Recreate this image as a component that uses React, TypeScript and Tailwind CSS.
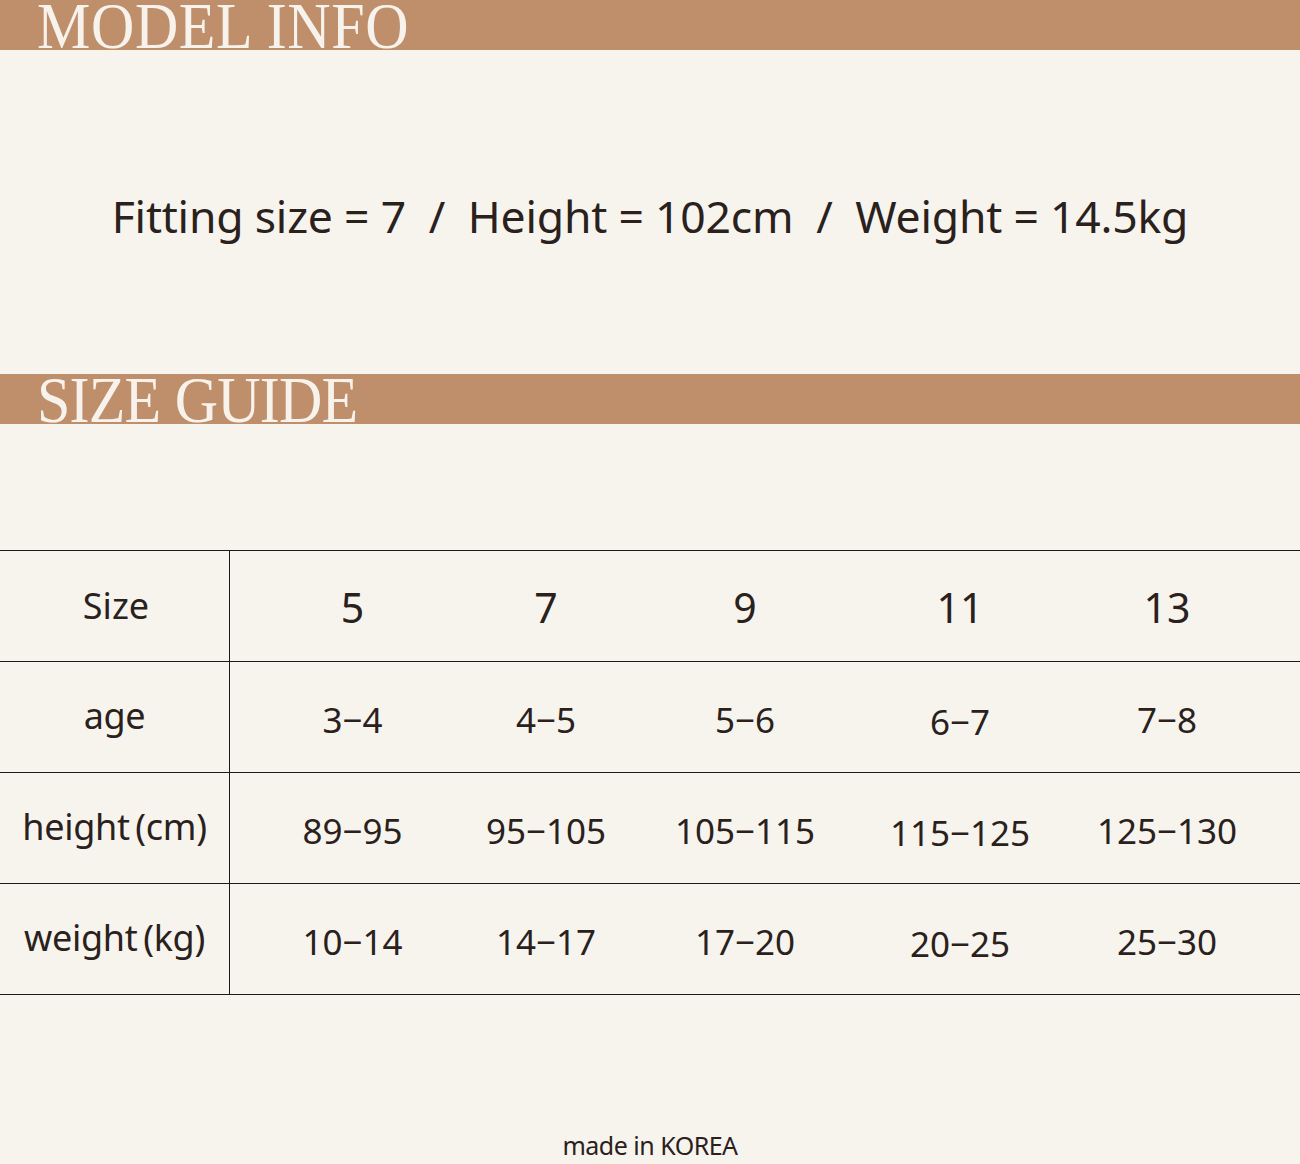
const sizes = ["5", "7", "9", "11", "13"];

const rows: { label: string; values: string[] }[] = [
  { label: "age", values: ["3−4", "4−5", "5−6", "6−7", "7−8"] },
  { label: "height\u2009(cm)", values: ["89−95", "95−105", "105−115", "115−125", "125−130"] },
  { label: "weight\u2009(kg)", values: ["10−14", "14−17", "17−20", "20−25", "25−30"] },
];

// column widths picked so each value sits under its header number
const cols = "grid grid-cols-[230px_245px_142px_256px_174px_240px_1fr]";

function SectionBar({ title, tracking }: { title: string; tracking: string }) {
  return (
    <div className="h-[50px] bg-[#bf8f6c] flex items-end pl-[37px]">
      <h2
        className={`font-['Liberation_Serif',serif] text-[60px] leading-[50px] ${tracking} text-[#f7f3ec] mb-[-3px] whitespace-nowrap scale-y-[1.1] origin-[0_90%]`}
      >
        {title}
      </h2>
    </div>
  );
}

export default function App() {
  return (
    <div className="w-[1300px] h-[1164px] bg-[#f7f4ee] text-[#2a211d] font-['Noto_Sans',sans-serif] overflow-hidden">
      <SectionBar title="MODEL INFO" tracking="tracking-[0.6px]" />

      <div className="h-[324px] flex items-center justify-center pt-[8px]">
        <p className="text-[44.5px] whitespace-pre tracking-[-0.2px]">
          {"Fitting size = 7  /  Height = 102cm  /  Weight = 14.5kg"}
        </p>
      </div>

      <SectionBar title="SIZE GUIDE" tracking="tracking-[-0.8px]" />

      <div className="mt-[126px] border-t border-[#1f1a17]">
        <div className={`${cols} h-[111px] border-b border-[#1f1a17]`}>
          <div className="border-r border-[#1f1a17] flex items-center justify-center text-[36px] pl-[3px]">
            Size
          </div>
          {sizes.map((s) => (
            <div key={s} className="flex items-center justify-center text-[41px] pt-[4px]">
              {s}
            </div>
          ))}
          <div />
        </div>

        {rows.map((r) => (
          <div key={r.label} className={`${cols} h-[111px] border-b border-[#1f1a17]`}>
            <div className="border-r border-[#1f1a17] flex items-center justify-center text-[36px] tracking-[-0.3px] pb-[2px] whitespace-nowrap">
              {r.label}
            </div>
            {r.values.map((v, i) => (
              <div
                key={v}
                className={`flex items-center justify-center text-[35px] ${i === 3 ? "pt-[10px]" : "pt-[6px]"}`}
              >
                {v}
              </div>
            ))}
            <div />
          </div>
        ))}
      </div>

      <div className="h-[168px] flex items-end justify-center">
        <p className="text-[25px] tracking-[-0.5px] mb-[-1px]">made in KOREA</p>
      </div>
    </div>
  );
}
